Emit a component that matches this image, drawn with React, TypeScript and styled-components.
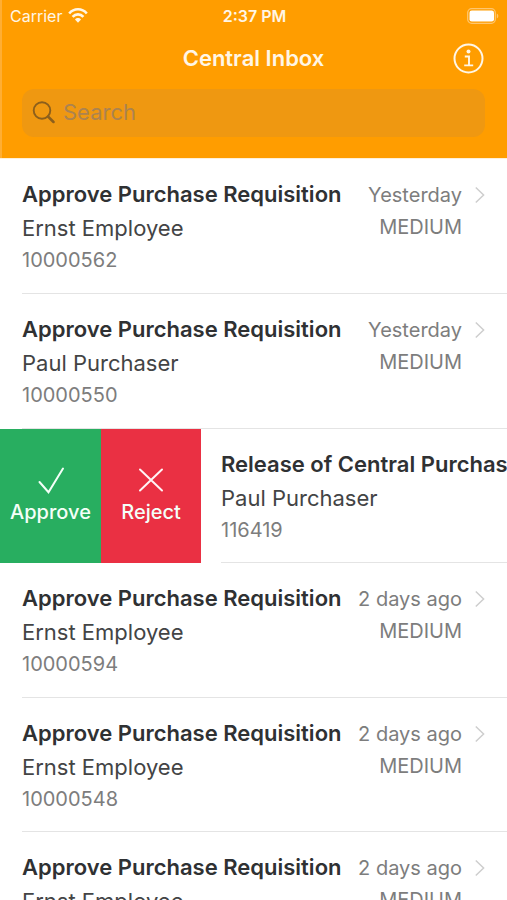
import React from "react";
import styled, { createGlobalStyle } from "styled-components";

const GlobalStyle = createGlobalStyle`
  *, *::before, *::after { box-sizing: border-box; }
  body {
    margin: 0;
    background: #fff;
    color: #2f3133;
    font-family: Inter, "Liberation Sans", sans-serif;
  }
  button, input { font: inherit; }
  button { border: 0; padding: 0; background: none; color: inherit; cursor: pointer; }
`;

const Screen = styled.main`
  display: flex;
  flex-direction: column;
  height: 100vh;
  overflow: hidden;
`;

const Header = styled.header`
  flex: none;
  padding-bottom: 20px;
  background: #ff9d00;
  border-bottom: 1px solid #fff0d8;
  box-shadow: inset 2px 0 #ffae33;
  color: #fff6e6;
`;

const StatusBar = styled.div`
  display: grid;
  grid-template-columns: 1fr auto 1fr;
  align-items: center;
  height: 31px;
  padding: 0 8px 0 10px;
  font-size: 16px;
  line-height: 20px;
`;

const Carrier = styled.span`
  display: flex;
  align-items: center;
  gap: 6px;
`;

const Clock = styled.time`
  font-weight: 600;
`;

const BatterySlot = styled.span`
  display: flex;
  justify-content: flex-end;
`;

const TitleBar = styled.div`
  display: grid;
  grid-template-columns: 1fr auto 1fr;
  align-items: center;
  height: 58px;
  padding: 0 23px 4px;
`;

const Title = styled.h1`
  grid-column: 2;
  margin: 0;
  font-size: 22px;
  line-height: 28px;
  font-weight: 600;
`;

const InfoButton = styled.button`
  display: flex;
  justify-self: end;
`;

const SearchField = styled.label`
  display: flex;
  align-items: center;
  gap: 8px;
  height: 48px;
  margin: 0 22px 1px;
  padding: 0 10px 2px;
  border-radius: 12px;
  background: #ef9811;
  color: #8c5f1c;
`;

const SearchInput = styled.input`
  flex: 1;
  min-width: 0;
  padding: 0;
  border: 0;
  outline: 0;
  background: transparent;
  color: #4a3a20;
  font-size: 22px;
  line-height: 28px;
  &::placeholder { color: #ab8350; opacity: 1; }
`;

const List = styled.ul`
  flex: 1;
  min-height: 0;
  margin: 0;
  padding: 0;
  list-style: none;
  overflow: hidden;
`;

const Row = styled.li`
  display: flex;
  height: 135px;
  overflow: hidden;
  &:nth-child(2n + 3) { height: 134px; }
`;

const Actions = styled.div`
  display: flex;
  flex: none;
`;

const ActionButton = styled.button<{ $tone: "approve" | "reject" }>`
  display: flex;
  flex-direction: column;
  align-items: center;
  justify-content: center;
  gap: 4px;
  width: ${(p) => (p.$tone === "approve" ? 101 : 100)}px;
  background: ${(p) => (p.$tone === "approve" ? "#28ae60" : "#ea3043")};
  color: #f4fff8;
  font-size: 20px;
  line-height: 28px;
  font-weight: 500;
`;

const Item = styled.article<{ $swiped?: boolean }>`
  display: flex;
  flex: ${(p) => (p.$swiped ? "none" : "1")};
  justify-content: space-between;
  min-width: 0;
  margin-left: ${(p) => (p.$swiped ? 20 : 22)}px;
  padding: 18px 22px 0 0;
  border-bottom: 1px solid #e4e4e4;
  white-space: nowrap;
`;

const Subject = styled.h2`
  margin: 0;
  font-size: 22px;
  line-height: 34px;
  font-weight: 600;
`;

const Person = styled.p`
  margin: 0;
  font-size: 22px;
  line-height: 34px;
  color: #434445;
`;

const Reference = styled.p`
  margin: 0;
  font-size: 20px;
  line-height: 30px;
  color: #7d7d7d;
`;

const Meta = styled.div`
  display: grid;
  grid-template-columns: auto 10px;
  column-gap: 13px;
  align-content: start;
  align-items: center;
  justify-items: end;
  padding-top: 2px;
  font-size: 20px;
  line-height: 32px;
  color: #7d7d7d;
`;

const WifiIcon = () => (
  <svg width="20" height="15" viewBox="0 0 20 15" aria-label="Wi-Fi" role="img">
    <g fill="none" stroke="#fff6e6" strokeWidth="2.6">
      <path d="M1.2 5.5C6-.1 14-.1 18.8 5.5" />
      <path d="M4.6 8.9c3-3.4 7.800-3.400 10.800 0" />
    </g>
    <path fill="#fff6e6" d="M7 11.500c1.700-1.900 4.300-1.900 6 0L10 14.800z" />
  </svg>
);

const BatteryIcon = () => (
  <svg width="32" height="16" viewBox="0 0 32 16" aria-label="Battery full" role="img">
    <rect x=".7" y=".7" width="27.600" height="14.600" rx="4" fill="none" stroke="#ffc66e" strokeWidth="1.300" />
    <rect x="2.500" y="2.500" width="24.500" height="11" rx="2.300" fill="#fff" />
    <path d="M29.800 5.500c2 .8 2 4.200 0 5z" fill="#ffc66e" />
  </svg>
);

const InfoIcon = () => (
  <svg width="31" height="31" viewBox="0 0 31 31" fill="none" stroke="#fff6e6" aria-hidden="true">
    <circle cx="15.500" cy="15.500" r="14" strokeWidth="2" />
    <circle cx="15.500" cy="8.500" r="2" fill="#fff6e6" stroke="none" />
    <path d="M11.800 13.500h4.200v8.700M11.200 22.400h9" strokeWidth="1.900" />
  </svg>
);

const SearchIcon = () => (
  <svg width="23" height="23" viewBox="0 0 23 23" fill="none" stroke="currentColor" strokeLinecap="round" aria-hidden="true">
    <circle cx="10" cy="9.500" r="8.300" strokeWidth="1.900" />
    <path d="M16 15.500l5.500 5.500" strokeWidth="2.500" />
  </svg>
);

const Chevron = () => (
  <svg width="10" height="18" viewBox="0 0 10 18" fill="none" stroke="#cecece" strokeWidth="1.500" aria-hidden="true">
    <path d="M.8 1.500L8.600 9 .8 16.500" />
  </svg>
);

const CheckIcon = () => (
  <svg width="28" height="28" viewBox="0 0 28 28" fill="none" stroke="#f4fff8" strokeWidth="2" strokeLinecap="round" aria-hidden="true">
    <path d="M2.500 16l9 10.200L26 2.500" />
  </svg>
);

const CrossIcon = () => (
  <svg width="28" height="28" viewBox="0 0 28 28" fill="none" stroke="#fff4f5" strokeWidth="2" strokeLinecap="round" aria-hidden="true">
    <path d="M3 3.500l22 21M25 3.500l-22 21" />
  </svg>
);

type Task = {
  subject: string;
  person: string;
  id?: string;
  when?: string;
  priority?: string;
  swiped?: boolean;
};

const requisition = "Approve Purchase Requisition";

const tasks: Task[] = [
  { subject: requisition, person: "Ernst Employee", id: "10000562", when: "Yesterday", priority: "MEDIUM" },
  { subject: requisition, person: "Paul Purchaser", id: "10000550", when: "Yesterday", priority: "MEDIUM" },
  { subject: "Release of Central Purchase", person: "Paul Purchaser", id: "116419", swiped: true },
  { subject: requisition, person: "Ernst Employee", id: "10000594", when: "2 days ago", priority: "MEDIUM" },
  { subject: requisition, person: "Ernst Employee", id: "10000548", when: "2 days ago", priority: "MEDIUM" },
  { subject: requisition, person: "Ernst Employee", when: "2 days ago", priority: "MEDIUM" },
];

const TaskRow = ({ task }: { task: Task }) => (
  <Row>
    {task.swiped && (
      <Actions>
        <ActionButton $tone="approve" type="button">
          <CheckIcon />
          Approve
        </ActionButton>
        <ActionButton $tone="reject" type="button">
          <CrossIcon />
          Reject
        </ActionButton>
      </Actions>
    )}
    <Item $swiped={task.swiped}>
      <div>
        <Subject>{task.subject}</Subject>
        <Person>{task.person}</Person>
        {task.id && <Reference>{task.id}</Reference>}
      </div>
      {task.when && (
        <Meta>
          <span>{task.when}</span>
          <Chevron />
          <span>{task.priority}</span>
        </Meta>
      )}
    </Item>
  </Row>
);

export default function App() {
  return (
    <>
      <GlobalStyle />
      <Screen>
        <Header>
          <StatusBar>
            <Carrier>
              Carrier
              <WifiIcon />
            </Carrier>
            <Clock>2:37 PM</Clock>
            <BatterySlot>
              <BatteryIcon />
            </BatterySlot>
          </StatusBar>
          <TitleBar>
            <Title>Central Inbox</Title>
            <InfoButton type="button" aria-label="Information">
              <InfoIcon />
            </InfoButton>
          </TitleBar>
          <SearchField>
            <SearchIcon />
            <SearchInput type="search" placeholder="Search" aria-label="Search" />
          </SearchField>
        </Header>
        <List>
          {tasks.map((task, index) => (
            <TaskRow key={index} task={task} />
          ))}
        </List>
      </Screen>
    </>
  );
}
